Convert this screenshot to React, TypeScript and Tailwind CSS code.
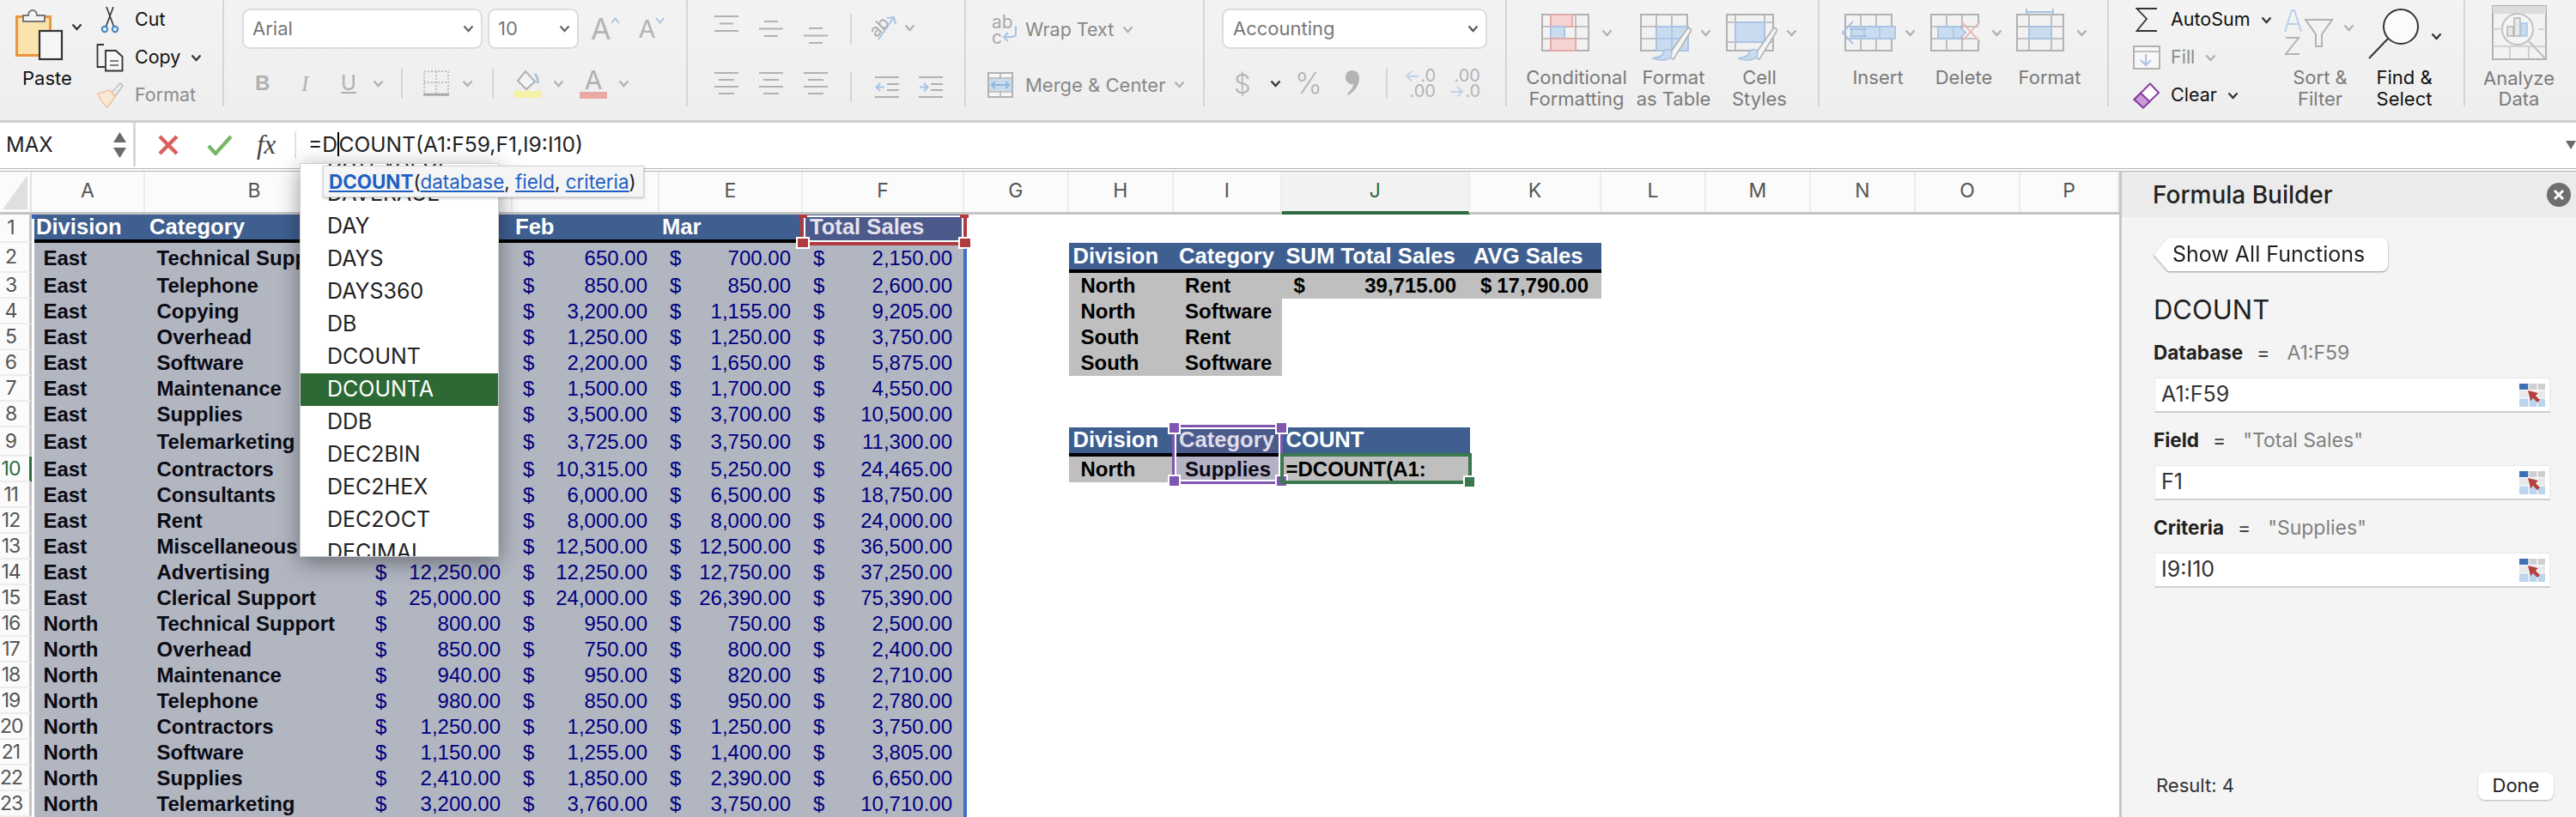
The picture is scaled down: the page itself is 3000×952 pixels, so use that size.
import React from "react";

const G = "#b2b2b2";
const LB = "#c9dcef";
const BS = "#a8c3e3";

function Chev({ color = "#b0b0b0", className = "" }: { color?: string; className?: string }) {
  return (
    <svg width="13" height="9" viewBox="0 0 13 9" className={`shrink-0 ${className}`}>
      <path d="M1.5 1.5 L6.5 7 L11.5 1.5" fill="none" stroke={color} strokeWidth="2.2" />
    </svg>
  );
}

function Sep({ className = "" }: { className?: string }) {
  return <div className={`w-[2px] bg-[#d6d6d6] shrink-0 ${className}`} />;
}

function PasteIcon() {
  return (
    <svg width="56" height="62" viewBox="0 0 56 62" className="shrink-0">
      <rect x="1.5" y="9.5" width="39" height="45" fill="#fbe3ad" stroke="#e8953f" strokeWidth="3" />
      <path d="M9 15 V8 H15 C15 0 25 0 25 8 H34 V15 Z" fill="#f4f4f4" stroke="#777" strokeWidth="2" />
      <rect x="28" y="26" width="26" height="33" fill="#f6f6f6" stroke="#333" strokeWidth="2.2" />
    </svg>
  );
}
function ScissorsIcon() {
  return (
    <svg width="24" height="32" viewBox="0 0 24 32" className="shrink-0">
      <path d="M7 25 L16 1 M17 25 L8 1" stroke="#333" strokeWidth="1.6" fill="none" />
      <circle cx="6" cy="27" r="3.2" fill="none" stroke="#3e86c8" strokeWidth="2" />
      <circle cx="18" cy="27" r="3.2" fill="none" stroke="#3e86c8" strokeWidth="2" />
    </svg>
  );
}
function CopyIcon() {
  return (
    <svg width="32" height="33" viewBox="0 0 32 33" className="shrink-0">
      <path d="M9 1 H1.5 V27 H10" fill="none" stroke="#333" strokeWidth="1.8" />
      <path d="M11 8 H23 L30.5 15 V31.5 H11 Z" fill="#f7f7f7" stroke="#333" strokeWidth="1.8" />
      <path d="M16 20 H26 M16 25 H26" stroke="#555" strokeWidth="1.6" />
    </svg>
  );
}
function BrushIcon() {
  return (
    <svg width="32" height="30" viewBox="0 0 32 30" className="shrink-0">
      <path d="M18 12 L28 1 L31 4 L22 16 Z" fill="none" stroke="#c4c4c4" strokeWidth="1.8" />
      <path d="M2 13 L16 9 L22 17 L13 29 Q7 25 2 13 Z" fill="#fae8d6" stroke="#eec7a3" strokeWidth="1.8" />
    </svg>
  );
}
function GrowA({ up }: { up: boolean }) {
  return (
    <div className="flex items-start">
      <span className={`${up ? "text-[34px]" : "text-[29px]"} text-[#b4b4b4] leading-[34px]`}>A</span>
      <svg width="11" height="8" viewBox="0 0 11 8" className="mt-[3px] shrink-0">
        <path d={up ? "M1 7 L5.5 1.5 L10 7" : "M1 1 L5.5 6.5 L10 1"} fill="none" stroke={BS} strokeWidth="1.8" />
      </svg>
    </div>
  );
}
function AlignIcon({ widths, offset = 0, h = 17 }: { widths: number[]; offset?: number; h?: number }) {
  return (
    <svg width="28" height={h + 20} viewBox={`0 0 28 ${h + 20}`} className="shrink-0">
      {widths.map((w, i) => (
        <rect key={i} x={(28 - w) / 2} y={offset + (i * h) / (widths.length - 1)} width={w} height="2" fill={G} />
      ))}
    </svg>
  );
}
function IndentIcon({ out }: { out: boolean }) {
  return (
    <svg width="28" height="26" viewBox="0 0 28 26" className="shrink-0">
      <rect x="0" y="1" width="28" height="2" fill={G} />
      <rect x="0" y="24" width="28" height="2" fill={G} />
      <rect x="14" y="9" width="14" height="2" fill={G} />
      <rect x="14" y="16" width="14" height="2" fill={G} />
      {out ? (
        <path d="M11 13.5 H2 M6 9 L1.5 13.5 L6 18" fill="none" stroke={BS} strokeWidth="2" />
      ) : (
        <path d="M1 13.5 H10 M6 9 L10.5 13.5 L6 18" fill="none" stroke={BS} strokeWidth="2" />
      )}
    </svg>
  );
}
function MiniGrid({ children, w = 56, h = 44, vs = [19, 38], hs = [15, 29], stroke = G }: { children?: React.ReactNode; w?: number; h?: number; vs?: number[]; hs?: number[]; stroke?: string }) {
  return (
    <>
      <rect x="1" y="1" width={w - 2} height={h - 2} fill="none" stroke={stroke} strokeWidth="2" />
      {vs.map((v) => (
        <path key={v} d={`M${v} 1 V${h - 1}`} stroke={stroke} strokeWidth="1.6" />
      ))}
      {hs.map((v) => (
        <path key={v} d={`M1 ${v} H${w - 1}`} stroke={stroke} strokeWidth="1.6" />
      ))}
      {children}
    </>
  );
}
function CondIcon() {
  return (
    <svg width="56" height="44" viewBox="0 0 56 44" className="shrink-0">
      <MiniGrid vs={[11, 27, 40]} />
      <rect x="11" y="1" width="25" height="14" fill="#f6d3d3" stroke="#e2a9a7" strokeWidth="1.8" />
      <rect x="11" y="15" width="16" height="14" fill={LB} stroke={BS} strokeWidth="1.8" />
      <rect x="11" y="29" width="29" height="14" fill="#f6d3d3" stroke="#e2a9a7" strokeWidth="1.8" />
    </svg>
  );
}
function BrushOver() {
  return (
    <>
      <path d="M32 50 L56 16 L60 19 L39 53 Z" fill="#f4f4f4" stroke={G} strokeWidth="1.6" />
      <path d="M14 52 C26 56 37 54 37 46 C36 40 28 40 27 46 C26 50 20 51 14 52 Z" fill={LB} stroke={BS} strokeWidth="1.6" />
    </>
  );
}
function FatIcon() {
  return (
    <svg width="60" height="56" viewBox="0 0 60 56" className="shrink-0">
      <MiniGrid w={56} vs={[19, 37]} hs={[15, 29]} />
      <rect x="19" y="15" width="37" height="28" fill={LB} stroke={BS} strokeWidth="1.8" />
      <path d="M37 15 V43 M19 29 H56" stroke={BS} strokeWidth="1.6" />
      <BrushOver />
    </svg>
  );
}
function CellStyleIcon() {
  return (
    <svg width="60" height="56" viewBox="0 0 60 56" className="shrink-0">
      <MiniGrid w={56} vs={[11, 45]} hs={[10, 33]} />
      <rect x="11" y="10" width="34" height="23" fill={LB} stroke={BS} strokeWidth="1.8" />
      <BrushOver />
    </svg>
  );
}
function InsertIcon() {
  return (
    <svg width="64" height="44" viewBox="0 0 64 44" className="shrink-0">
      <g transform="translate(4 0)">
        <MiniGrid vs={[19, 37]} />
      </g>
      <rect x="12" y="15" width="51" height="14" fill={LB} stroke={BS} strokeWidth="1.8" />
      <path d="M27 15 V29 M45 15 V29" stroke={BS} strokeWidth="1.6" />
      <path d="M30 18 H10 M30 26 H10 M14 9 L2 22 L14 35" fill="none" stroke={BS} strokeWidth="2" />
    </svg>
  );
}
function DeleteIcon() {
  return (
    <svg width="60" height="44" viewBox="0 0 60 44" className="shrink-0">
      <path d="M56 13 V1 H1 V43 H56 V31" fill="none" stroke={G} strokeWidth="2" />
      <path d="M1 15 H56 M1 29 H56 M19 1 V43 M37 1 V43" stroke={G} strokeWidth="1.6" />
      <path d="M9 15 H34 L41 22 L34 29 H9 Z" fill={LB} stroke={BS} strokeWidth="1.8" />
      <path d="M27 15 V29" stroke={BS} strokeWidth="1.6" />
      <path d="M36 9 L58 33 M58 9 L36 33" stroke="#eeb5b2" strokeWidth="1.8" />
    </svg>
  );
}
function CellFormatIcon() {
  return (
    <svg width="56" height="55" viewBox="0 0 56 55" className="shrink-0">
      <path d="M12 9 H43 M12 5 V12 M43 5 V12" stroke={BS} strokeWidth="1.8" />
      <g transform="translate(0 11)">
        <MiniGrid vs={[15, 41]} />
        <rect x="15" y="15" width="26" height="14" fill={LB} stroke={BS} strokeWidth="1.8" />
      </g>
    </svg>
  );
}
function SigmaIcon() {
  return (
    <svg width="25" height="28" viewBox="0 0 25 28" className="shrink-0">
      <path d="M25 1 H1.5 L13 13 L1.5 27 H25" fill="none" stroke="#333" strokeWidth="1.8" />
    </svg>
  );
}
function FillIcon() {
  return (
    <svg width="32" height="28" viewBox="0 0 32 28" className="shrink-0">
      <rect x="1" y="1" width="30" height="26" fill="#f7f7f7" stroke={G} strokeWidth="2" />
      <path d="M1 7 H31" stroke={G} strokeWidth="1.6" />
      <path d="M15 10 V23 M9 17 L15 23 L21 17" fill="none" stroke={BS} strokeWidth="2" />
    </svg>
  );
}
function ClearIcon() {
  return (
    <svg width="32" height="31" viewBox="0 0 32 31" className="shrink-0">
      <path d="M1.5 20 L20 1.5 L30 12 L12 29.5 Z" fill="#fff" stroke="#8a3ea3" strokeWidth="2" />
      <path d="M1.5 20 L9 12.5 L19.5 22.5 L12 29.5 Z" fill="#c99bd6" stroke="#8a3ea3" strokeWidth="2" />
    </svg>
  );
}
function SortIcon() {
  return (
    <svg width="58" height="56" viewBox="0 0 58 56" className="shrink-0">
      <path d="M1 27 L9 2 H12 L20 27 M4.5 18 H16.5" fill="none" stroke="#b9d0ea" strokeWidth="2" />
      <path d="M2 34 H17 L2 53 H18" fill="none" stroke={G} strokeWidth="2" />
      <path d="M25 13 H56 L44 30 V44 H37 V30 Z" fill="#f3f3f3" stroke={G} strokeWidth="2" />
    </svg>
  );
}
function FindIcon() {
  return (
    <svg width="60" height="60" viewBox="0 0 60 60" className="shrink-0">
      <circle cx="38" cy="21" r="20" fill="#fbfbfb" stroke="#333" strokeWidth="2" />
      <path d="M23 35 L1 58" stroke="#333" strokeWidth="2" />
    </svg>
  );
}
function AnalyzeIcon() {
  return (
    <svg width="64" height="64" viewBox="0 0 64 64" className="shrink-0">
      <rect x="1" y="1" width="62" height="62" fill="#f2f2f2" stroke={G} strokeWidth="2" />
      <rect x="1" y="1" width="62" height="9" fill="#dcdcdc" />
      <path d="M1 28 H10 M54 28 H63 M1 48 H63 M21 48 V63 M43 48 V63" stroke="#c8c8c8" strokeWidth="1.6" />
      <circle cx="30" cy="28" r="18" fill="#f5f5f5" stroke="#c2c2c2" strokeWidth="2" />
      <path d="M43 42 L62 62" stroke="#c2c2c2" strokeWidth="2.4" />
      <rect x="18" y="25" width="7" height="11" fill="#e8e8e8" stroke={G} strokeWidth="1.4" />
      <rect x="26" y="15" width="7" height="21" fill="#e8e8e8" stroke={G} strokeWidth="1.4" />
      <rect x="34" y="21" width="7" height="15" fill={LB} stroke={BS} strokeWidth="1.4" />
    </svg>
  );
}
function RefIcon() {
  return (
    <svg width="30" height="27" viewBox="0 0 30 27" className="shrink-0">
      <rect x="0" y="0" width="30" height="27" fill="#e9e9e9" />
      <rect x="0" y="0" width="11" height="7" fill="#3f6fb5" />
      <rect x="11" y="0" width="19" height="7" fill="#cfcfcf" />
      <rect x="0" y="17" width="30" height="10" fill="#bcd4ec" />
      <path d="M0 7.5 H30 M0 17 H30 M11 0 V27 M21 0 V27" stroke="#fff" strokeWidth="1.2" />
      <path d="M10 8 L22 11 L19 14 L24 19 L21 22 L16 17 L13 20 Z" fill="#b5413f" />
    </svg>
  );
}

function SmallBtn({ icon, label, dim, chev, chevDark, textMl = "" }: { icon: React.ReactNode; label: string; dim?: boolean; chev?: boolean; chevDark?: boolean; textMl?: string }) {
  return (
    <div className="flex items-center h-[44px] shrink-0">
      <div className="w-[45px] flex justify-center shrink-0">{icon}</div>
      <span className={`text-[21.5px] ${textMl} leading-none ${dim ? "text-[#8c8c8c]" : "text-[#111]"}`}>{label}</span>
      {chev && <Chev color={chevDark ? "#333" : "#b0b0b0"} className="ml-[12px]" />}
    </div>
  );
}

function BigBtn({ w, iconMl, icon, chevLeft, lines, dark, chevDark, top = "pt-[16px]", iconH = "h-[62px]" }: { w: string; iconMl: string; icon: React.ReactNode; chevLeft: string; lines: string[]; dark?: boolean; chevDark?: boolean; top?: string; iconH?: string }) {
  return (
    <div className={`${w} flex flex-col items-center shrink-0`}>
      <div className={`w-full flex items-start shrink-0 ${iconH} ${top} box-content`}>
        <div className={iconMl}>{icon}</div>
        <Chev color={chevDark ? "#333" : "#b0b0b0"} className={chevLeft} />
      </div>
      <div className={`text-[22px] leading-[25px] text-center whitespace-nowrap ${dark ? "text-[#111]" : "text-[#7b7b7b]"}`}>
        {lines.map((l) => (
          <div key={l}>{l}</div>
        ))}
      </div>
    </div>
  );
}

function Ribbon() {
  return (
    <div className="h-[143px] shrink-0 bg-gradient-to-b from-[#f3f3f3] to-[#eeeeee] border-b-[3px] border-[#cfcfcf] flex items-start">
      {/* Clipboard */}
      <div className="w-[261px] h-[124px] border-r-2 border-[#d6d6d6] flex shrink-0">
        <div className="w-[105px] pl-[18px] shrink-0 flex flex-col pt-[10px]">
          <div className="flex items-center">
            <PasteIcon />
            <Chev color="#333" className="ml-[9px] -mt-[20px]" />
          </div>
          <span className="text-[22px] leading-none text-[#111] ml-[8px] mt-[8px]">Paste</span>
        </div>
        <div className="flex flex-col pt-[1px]">
          <SmallBtn icon={<ScissorsIcon />} label="Cut" textMl="ml-[7px]" />
          <SmallBtn icon={<CopyIcon />} label="Copy" chev chevDark textMl="ml-[7px]" />
          <SmallBtn icon={<BrushIcon />} label="Format" dim textMl="ml-[7px]" />
        </div>
      </div>
      {/* Font */}
      <div className="w-[540px] h-[124px] border-r-2 border-[#d6d6d6] shrink-0 pt-[10px] pl-[21px]">
        <div className="flex items-center h-[47px]">
          <div className="w-[280px] h-full bg-white border-2 border-[#dcdcdc] rounded-[9px] flex items-center justify-between pl-[10px] pr-[8px] text-[22px] text-[#777]">
            <span>Arial</span>
            <Chev color="#666" />
          </div>
          <div className="w-[106px] h-full ml-[6px] bg-white border-2 border-[#dcdcdc] rounded-[9px] flex items-center justify-between pl-[10px] pr-[8px] text-[22px] text-[#777]">
            <span>10</span>
            <Chev color="#666" />
          </div>
          <div className="ml-[14px]"><GrowA up /></div>
          <div className="ml-[21px]"><GrowA up={false} /></div>
        </div>
        <div className="flex items-center h-[36px] mt-[22px]">
          <span className="ml-[15px] w-[18px] text-[24px] leading-none font-bold text-[#b0b0b0] font-['Liberation_Sans',sans-serif]">B</span>
          <span className="ml-[36px] w-[14px] text-[25px] leading-none italic text-[#b0b0b0] font-['Liberation_Serif',serif]">I</span>
          <span className="ml-[32px] w-[18px] text-[24px] leading-none text-[#b0b0b0] underline">U</span>
          <Chev className="ml-[19px]" />
          <Sep className="h-[36px] ml-[20px]" />
          <svg width="30" height="30" viewBox="0 0 30 30" className="ml-[24px] shrink-0">
            <rect x="1" y="1" width="28" height="26" fill="none" stroke={G} strokeWidth="1.5" strokeDasharray="2 2" />
            <path d="M15 1 V27 M1 14 H29" stroke={G} strokeWidth="1.5" strokeDasharray="2 2" />
            <path d="M0 28.5 H30" stroke="#999" strokeWidth="2" />
          </svg>
          <Chev className="ml-[15px]" />
          <Sep className="h-[36px] ml-[22px]" />
          <svg width="32" height="34" viewBox="0 0 32 34" className="ml-[24px] shrink-0">
            <path d="M4 14 L13 3 L24 15 L14 24 Z" fill="#f4f4f4" stroke={G} strokeWidth="2" />
            <path d="M24 6 Q28 10 27 17" fill="none" stroke={BS} strokeWidth="3" />
            <rect x="0" y="26" width="32" height="8" fill="#f6f1a5" />
          </svg>
          <Chev className="ml-[13px]" />
          <div className="ml-[18px] w-[32px] flex flex-col items-center shrink-0">
            <span className="text-[30px] leading-[26px] text-[#b0b0b0]">A</span>
            <div className="w-[32px] h-[8px] bg-[#eba9a5] mt-[1px]" />
          </div>
          <Chev className="ml-[13px]" />
        </div>
      </div>
      {/* Alignment */}
      <div className="w-[324px] h-[124px] border-r-2 border-[#d6d6d6] shrink-0 pl-[31px] pt-[16px]">
        <div className="flex items-start h-[36px]">
          <AlignIcon widths={[28, 16, 28]} offset={2} />
          <div className="ml-[24px]"><AlignIcon widths={[16, 28, 16]} offset={8} /></div>
          <div className="ml-[24px]"><AlignIcon widths={[16, 28, 16]} offset={16} /></div>
          <Sep className="h-[36px] ml-[26px]" />
          <span className="ml-[20px] -rotate-45 text-[20px] leading-[30px] text-[#aaa]">ab</span>
          <svg width="28" height="32" viewBox="0 0 28 32" className="-ml-[14px] shrink-0">
            <path d="M2 30 L20 4 M12 5 L20 4 L22 12" fill="none" stroke={BS} strokeWidth="2" />
          </svg>
          <Chev className="ml-[4px] mt-[12px]" />
        </div>
        <div className="flex items-center h-[36px] mt-[31px]">
          <div className="mt-[10px]"><AlignIcon widths={[28, 18, 28, 18]} h={24} /></div>
          <div className="ml-[24px] mt-[10px]"><AlignIcon widths={[28, 18, 28, 18]} h={24} /></div>
          <div className="ml-[24px] mt-[10px]"><AlignIcon widths={[28, 18, 28, 18]} h={24} /></div>
          <Sep className="h-[36px] ml-[26px]" />
          <div className="ml-[27px]"><IndentIcon out /></div>
          <div className="ml-[23px]"><IndentIcon out={false} /></div>
        </div>
      </div>
      {/* Wrap / merge */}
      <div className="w-[278px] h-[124px] border-r-2 border-[#d6d6d6] shrink-0 pl-[25px]">
        <div className="flex items-center h-[35px] mt-[17px]">
          <div className="w-[44px] ml-[5px] shrink-0 text-[21px] leading-[18px] text-[#aaa]">
            <div>ab</div>
            <div className="flex items-center">
              c
              <svg width="18" height="20" viewBox="0 0 18 20" className="shrink-0 -mt-[10px]">
                <path d="M16 1 V10 Q16 14 10 14 H3 M7 9 L2 14 L7 19" fill="none" stroke={BS} strokeWidth="2" />
              </svg>
            </div>
          </div>
          <span className="text-[21.5px] text-[#888] -ml-[5px] leading-none">Wrap Text</span>
          <Chev className="ml-[10px]" />
        </div>
        <div className="flex items-center h-[35px] mt-[29px]">
          <svg width="30" height="30" viewBox="0 0 30 30" className="shrink-0">
            <rect x="1" y="1" width="28" height="28" fill="#f7f7f7" stroke={G} strokeWidth="2" />
            <path d="M15 1 V7 M15 23 V29 M1 7 H29 M1 23 H29" stroke={G} strokeWidth="1.6" />
            <rect x="2" y="8" width="26" height="14" fill={LB} />
            <path d="M5 15 H25 M9 11 L5 15 L9 19 M21 11 L25 15 L21 19" fill="none" stroke="#8fb4de" strokeWidth="1.8" />
          </svg>
          <span className="text-[22px] text-[#888] ml-[14px] leading-none">Merge &amp; Center</span>
          <Chev className="ml-[10px]" />
        </div>
      </div>
      {/* Number */}
      <div className="w-[352px] h-[124px] border-r-2 border-[#d6d6d6] shrink-0 pt-[10px] pl-[20px]">
        <div className="w-[309px] h-[47px] bg-white border-2 border-[#dcdcdc] rounded-[9px] flex items-center justify-between pl-[11px] pr-[8px] text-[22px] text-[#777]">
          <span>Accounting</span>
          <Chev color="#555" />
        </div>
        <div className="flex items-center h-[36px] mt-[22px]">
          <span className="ml-[14px] w-[18px] text-[31px] text-[#b4b4b4] leading-none font-light">$</span>
          <Chev color="#333" className="ml-[24px]" />
          <span className="ml-[16px] w-[34px] text-[34px] text-[#b4b4b4] leading-none font-light">%</span>
          <svg width="18" height="32" viewBox="0 0 18 32" className="ml-[24px] shrink-0">
            <path d="M9 1 C14 1 17 5 17 10 C17 19 11 26 4 30 L3 28 C8 24 10 20 10 17 C5 18 1 14 1 9 C1 4 4 1 9 1 Z" fill="#b4b4b4" />
          </svg>
          <Sep className="h-[36px] ml-[30px]" />
          <div className="ml-[22px] w-[34px] text-[20px] leading-[18px] text-[#b4b4b4] shrink-0">
            <div className="flex justify-end items-center"><span className="text-[#b9d0ea]">←</span>.0</div>
            <div className="text-right">.00</div>
          </div>
          <div className="ml-[18px] w-[34px] text-[20px] leading-[18px] text-[#b4b4b4] shrink-0">
            <div className="text-right">.00</div>
            <div className="flex justify-end items-center"><span className="text-[#b9d0ea]">→</span>.0</div>
          </div>
        </div>
      </div>
      {/* Styles */}
      <div className="w-[364px] h-[124px] border-r-2 border-[#d6d6d6] shrink-0 pl-[20px] flex">
        <BigBtn w="w-[122px]" iconMl="ml-[20px]" icon={<CondIcon />} chevLeft="ml-[14px] mt-[18px]" lines={["Conditional", "Formatting"]} />
        <BigBtn w="w-[104px]" iconMl="ml-[13px]" icon={<FatIcon />} chevLeft="ml-[10px] mt-[18px]" lines={["Format", "as Table"]} />
        <BigBtn w="w-[96px]" iconMl="ml-[9px]" icon={<CellStyleIcon />} chevLeft="ml-[10px] mt-[18px]" lines={["Cell", "Styles"]} />
      </div>
      {/* Cells */}
      <div className="w-[337px] h-[124px] border-r-2 border-[#d6d6d6] shrink-0 pl-[18px] flex">
        <BigBtn w="w-[100px]" iconMl="ml-[7px]" icon={<InsertIcon />} chevLeft="ml-[10px] mt-[18px]" lines={["Insert"]} />
        <BigBtn w="w-[100px]" iconMl="ml-[11px]" icon={<DeleteIcon />} chevLeft="ml-[11px] mt-[18px]" lines={["Delete"]} />
        <BigBtn w="w-[100px]" iconMl="ml-[11px]" icon={<CellFormatIcon />} chevLeft="ml-[14px] mt-[29px]" top="pt-[5px]" iconH="h-[73px]" lines={["Format"]} />
      </div>
      {/* Editing */}
      <div className="w-[415px] h-[124px] border-r-2 border-[#d6d6d6] shrink-0 flex">
        <div className="w-[196px] pl-[21px] shrink-0 flex flex-col pt-[1px]">
          <SmallBtn icon={<SigmaIcon />} label="AutoSum" chev chevDark textMl="ml-[6px]" />
          <SmallBtn icon={<FillIcon />} label="Fill" dim chev textMl="ml-[6px]" />
          <SmallBtn icon={<ClearIcon />} label="Clear" chev chevDark textMl="ml-[6px]" />
        </div>
        <BigBtn w="w-[100px]" iconMl="ml-[8px]" icon={<SortIcon />} chevLeft="ml-[11px] mt-[18px]" top="pt-[10px]" iconH="h-[68px]" lines={["Sort &", "Filter"]} />
        <BigBtn w="w-[96px]" iconMl="ml-[6px]" icon={<FindIcon />} chevLeft="ml-[13px] mt-[28px]" top="pt-[10px]" iconH="h-[68px]" lines={["Find &", "Select"]} dark chevDark />
      </div>
      <div className="flex-1 flex flex-col items-center pt-[6px] pr-[4px]">
        <AnalyzeIcon />
        <div className="text-[22px] leading-[24px] text-center text-[#7b7b7b] mt-[9px]">
          <div>Analyze</div>
          <div>Data</div>
        </div>
      </div>
    </div>
  );
}

function FormulaBar() {
  return (
    <div className="h-[57px] shrink-0 bg-white border-b-[4px] border-double border-[#b4b4b4] flex items-center pb-[2px]">
      <div className="w-[158px] h-full border-r-[3px] border-[#d8d8d8] flex items-center justify-between pl-[7px] pr-[8px] shrink-0">
        <span className="text-[24px] text-[#222]">MAX</span>
        <div className="flex flex-col gap-[6px] shrink-0">
          <svg width="15" height="12" viewBox="0 0 15 12"><path d="M7.5 0 L15 12 H0 Z" fill="#6a6a6a" /></svg>
          <svg width="15" height="12" viewBox="0 0 15 12"><path d="M7.5 12 L15 0 H0 Z" fill="#6a6a6a" /></svg>
        </div>
      </div>
      <svg width="24" height="24" viewBox="0 0 24 24" className="ml-[26px] shrink-0">
        <path d="M2 2 L22 22 M22 2 L2 22" stroke="#d9605c" strokeWidth="4.4" />
      </svg>
      <svg width="30" height="24" viewBox="0 0 30 24" className="ml-[33px] shrink-0">
        <path d="M2 13 L10 22 L28 2" fill="none" stroke="#75b566" strokeWidth="4.2" />
      </svg>
      <span className="ml-[28px] w-[30px] text-[31px] italic text-[#444] font-['Liberation_Serif',serif] leading-none">fx</span>
      <div className="ml-[14px] w-[2px] h-[32px] bg-[#e2e2e2]" />
      <div className="ml-[14px] flex items-center text-[24.6px] text-[#222] whitespace-nowrap">
        <span>=D</span>
        <span className="w-[1.5px] h-[28px] bg-black" />
        <span>COUNT(A1:F59,F1,I9:I10)</span>
      </div>
      <svg width="12" height="10" viewBox="0 0 12 10" className="ml-auto shrink-0">
        <path d="M6 10 L12 0 H0 Z" fill="#6a6a6a" />
      </svg>
    </div>
  );
}

const COLS =
  "grid grid-cols-[37px_132px_256px_172px_171px_167px_188px_121.5px_122.5px_125.5px_219.5px_153px_122px_122px_122px_122px_115px]";

function ColumnHeader() {
  const letters = "ABCDEFGHIJKLMNOP".split("");
  return (
    <div className={`${COLS} h-[50px] bg-[#fbfbfb] border-b-[3px] border-[#c4c4c4] shrink-0`}>
      <div className="border-r-2 border-[#e4e4e4] flex items-end p-[3px]">
        <div className="w-[30px] h-[40px] bg-[#dfdfdf] [clip-path:polygon(100%_0,100%_100%,0_100%)]" />
      </div>
      {letters.map((l) => (
        <div
          key={l}
          className={`flex items-center justify-center text-[23px] border-r-2 border-[#ececec] pb-[2px] ${
            l === "J" ? "bg-[#f2f2f2] text-[#2f6b3f] border-b-[4px] border-b-[#2f6b3f] -mb-[3px]" : "text-[#555]"
          }`}
        >
          {l}
        </div>
      ))}
    </div>
  );
}

type Money = number | null;
const rows: [string, string, Money, Money, Money, Money][] = [
  ["East", "Technical Support", null, 650, 700, 2150],
  ["East", "Telephone", null, 850, 850, 2600],
  ["East", "Copying", null, 3200, 1155, 9205],
  ["East", "Overhead", null, 1250, 1250, 3750],
  ["East", "Software", null, 2200, 1650, 5875],
  ["East", "Maintenance", null, 1500, 1700, 4550],
  ["East", "Supplies", null, 3500, 3700, 10500],
  ["East", "Telemarketing", null, 3725, 3750, 11300],
  ["East", "Contractors", null, 10315, 5250, 24465],
  ["East", "Consultants", null, 6000, 6500, 18750],
  ["East", "Rent", null, 8000, 8000, 24000],
  ["East", "Miscellaneous", null, 12500, 12500, 36500],
  ["East", "Advertising", 12250, 12250, 12750, 37250],
  ["East", "Clerical Support", 25000, 24000, 26390, 75390],
  ["North", "Technical Support", 800, 950, 750, 2500],
  ["North", "Overhead", 850, 750, 800, 2400],
  ["North", "Maintenance", 940, 950, 820, 2710],
  ["North", "Telephone", 980, 850, 950, 2780],
  ["North", "Contractors", 1250, 1250, 1250, 3750],
  ["North", "Software", 1150, 1255, 1400, 3805],
  ["North", "Supplies", 2410, 1850, 2390, 6650],
  ["North", "Telemarketing", 3200, 3760, 3750, 10710],
];

const fmt = (n: number) => n.toLocaleString("en-US", { minimumFractionDigits: 2, maximumFractionDigits: 2 });

function Money({ v }: { v: Money }) {
  return (
    <div className="bg-[#b1b6c1] text-[#00007f] flex items-center justify-between pl-[12px] pr-[14px] overflow-hidden">
      {v !== null && (
        <>
          <span>$</span>
          <span>{fmt(v)}</span>
        </>
      )}
    </div>
  );
}

function Txt({ children, bold = true, className = "" }: { children?: React.ReactNode; bold?: boolean; className?: string }) {
  return <div className={`flex items-center whitespace-nowrap ${bold ? "font-bold" : ""} ${className}`}>{children}</div>;
}

const HEAD = "bg-[#3f5f90] text-white text-[25.6px] border-b-4 border-black";
const GREY = "bg-[#bfbfbf] text-black";

function RowLabel({ n, active }: { n: number; active?: boolean }) {
  return (
    <div className={`font-['Inter',sans-serif] text-[23px] bg-[#fbfbfb] border-b-2 border-[#ececec] flex items-center border-r-[3px] ${active ? "text-[#2f6b3f] border-r-[#2f6b3f] border-r-4" : "text-[#555] border-r-[#c4c4c4]"}`}>
      <span className="w-[25px] -tracking-[1px] text-center">{n}</span>
    </div>
  );
}

function Sheet() {
  return (
    <div className="relative w-[2468px] shrink-0 flex flex-col font-['Liberation_Sans',Arial,sans-serif] text-[24px] leading-none overflow-hidden">
      <div className="font-['Inter',sans-serif]">
        <ColumnHeader />
      </div>
      {/* Row 1 */}
      <div className={`${COLS} h-[33px] shrink-0`}>
        <RowLabel n={1} />
        <Txt className={`${HEAD} ml-[3px] pl-[2px]`}>Division</Txt>
        <Txt className={`${HEAD} pl-[5px]`}>Category</Txt>
        <Txt className={HEAD}></Txt>
        <Txt className={`${HEAD} pl-[3px]`}>Feb</Txt>
        <Txt className={`${HEAD} pl-[3px]`}>Mar</Txt>
        <Txt className="bg-[#4b5a8b] text-[#e6e2ec] text-[25.6px] pl-[8px] pb-[4px]">Total Sales</Txt>
      </div>
      {rows.map((r, i) => {
        const n = i + 2;
        const h = n === 2 ? "h-[35px]" : n === 9 ? "h-[34px]" : "h-[30px]";
        return (
          <div key={n} className={`${COLS} ${h} shrink-0`}>
            <RowLabel n={n} active={n === 10} />
            <Txt className="bg-[#b1b6c1] text-[#0a0a14] ml-[3px] pl-[10.5px]">{r[0]}</Txt>
            <Txt className="bg-[#b1b6c1] text-[#0a0a14] pl-[13.5px] overflow-hidden">{r[1]}</Txt>
            <Money v={r[2]} />
            <Money v={r[3]} />
            <Money v={r[4]} />
            <Money v={r[5]} />
            <div />
            {n === 2 && (
              <>
                <Txt className={`${HEAD} pl-[5px]`}>Division</Txt>
                <Txt className={`${HEAD} pl-[6px]`}>Category</Txt>
                <Txt className={`${HEAD} pl-[5px] whitespace-pre`}>SUM Total Sales</Txt>
                <Txt className={`${HEAD} pl-[4px]`}>AVG Sales</Txt>
              </>
            )}
            {n === 3 && (
              <>
                <Txt className={`${GREY} pl-[14px]`}>North</Txt>
                <Txt className={`${GREY} pl-[13px]`}>Rent</Txt>
                <Txt className={`${GREY} justify-between pl-[14px] pr-[16px]`}>
                  <span>$</span>
                  <span>39,715.00</span>
                </Txt>
                <Txt className={`${GREY} justify-between pl-[12px] pr-[15px]`}>
                  <span>$</span>
                  <span>17,790.00</span>
                </Txt>
              </>
            )}
            {(n === 4 || n === 5 || n === 6) && (
              <>
                <Txt className={`${GREY} pl-[14px]`}>{n === 4 ? "North" : "South"}</Txt>
                <Txt className={`${GREY} pl-[13px]`}>{n === 5 ? "Rent" : "Software"}</Txt>
              </>
            )}
            {n === 9 && (
              <>
                <Txt className={`${HEAD} pl-[5px]`}>Division</Txt>
                <Txt className="bg-[#4b5a8b] text-[#dfdcea] text-[25.6px] pl-[6px] border-b-4 border-black">Category</Txt>
                <Txt className={`${HEAD} pl-[5px]`}>COUNT</Txt>
              </>
            )}
            {n === 10 && (
              <>
                <Txt className={`${GREY} pl-[14px]`}>North</Txt>
                <Txt className="bg-[#b4b2c4] text-[#0a0a14] pl-[13px]">Supplies</Txt>
                <Txt className={`${GREY} pl-[5px]`}>=DCOUNT(A1:</Txt>
              </>
            )}
          </div>
        );
      })}

      {/* Range highlight overlays */}
      <div className="absolute left-[37px] top-[50px] w-[5px] h-[5px] bg-[#3566c4]" />
      <div className="absolute left-[1122px] top-[86px] bottom-0 w-[4px] bg-[#3f6fc8]" />
      <div className="absolute left-[932px] top-[51px] w-[194px] h-[35px] border-x-[4px] border-b-[4px] border-[#b03a3d]">
        <div className="w-full h-full border-2 border-white" />
      </div>
      <div className="absolute left-[929px] top-[78px] w-[12px] h-[10px] bg-[#b03a3d] outline-2 outline-white" />
      <div className="absolute left-[1118px] top-[78px] w-[12px] h-[10px] bg-[#b03a3d] outline-2 outline-white" />
      <div className="absolute left-[930px] top-[50px] w-[10px] h-[4px] bg-[#b03a3d]" />
      <div className="absolute left-[1118px] top-[50px] w-[10px] h-[4px] bg-[#b03a3d]" />

      <div className="absolute left-[1365px] top-[295px] w-[129px] h-[69px] border-[3px] border-[#7f57b1]">
        <div className="w-full h-full border-2 border-white" />
      </div>
      <div className="absolute left-[1362px] top-[293px] w-[11px] h-[11px] bg-[#7f57b1] outline-2 outline-white" />
      <div className="absolute left-[1487px] top-[293px] w-[11px] h-[11px] bg-[#7f57b1] outline-2 outline-white" />
      <div className="absolute left-[1362px] top-[355px] w-[11px] h-[11px] bg-[#7f57b1] outline-2 outline-white" />
      <div className="absolute left-[1487px] top-[355px] w-[11px] h-[11px] bg-[#7f57b1] outline-2 outline-white" />

      <div className="absolute left-[1491px] top-[328px] w-[223px] h-[36px] border-[4px] border-[#3b7850]" />
      <div className="absolute left-[1706px] top-[356px] w-[11px] h-[11px] bg-[#3b7850] outline-2 outline-white" />
    </div>
  );
}

function ArgRow({ name, value, input }: { name: string; value: string; input: string }) {
  return (
    <div className="mb-[19px]">
      <div className="flex items-center h-[27px] text-[23px] leading-none">
        <span className="font-bold text-[#222] text-[22.5px]">{name}</span>
        <span className="ml-[16px] text-[#444]">=</span>
        <span className="ml-[20px] text-[#808080]">{value}</span>
      </div>
      <div className="mt-[15px] ml-[1px] w-[461px] h-[41px] bg-white border border-[#e8e8e8] border-b-2 border-b-[#cfcfcf] flex items-center justify-between pl-[7px] pr-[5px] text-[25px] text-[#333]">
        <span>{input}</span>
        <RefIcon />
      </div>
    </div>
  );
}

function Panel() {
  return (
    <div className="flex-1 relative bg-[#f4f4f4] border-l-[3px] border-[#c6c6c6] flex flex-col">
      <div className="h-[53px] bg-[#ebebeb] flex items-center justify-between pl-[36px] pr-[6px] shrink-0">
        <span className="text-[28px] font-medium text-[#222]">Formula Builder</span>
        <svg width="28" height="28" viewBox="0 0 28 28">
          <circle cx="14" cy="14" r="14" fill="#6e6e6e" />
          <path d="M9 9 L19 19 M19 9 L9 19" stroke="#fff" strokeWidth="3" />
        </svg>
      </div>
      <div className="pl-[37px] pt-[24px] flex-1 flex flex-col">
        <div className="flex items-center h-[39px] w-[273px] [filter:drop-shadow(0_1px_1px_rgba(0,0,0,0.4))]">
          <div className="w-[17px] h-[39px] bg-white [clip-path:polygon(100%_0,100%_100%,0_50%)] shrink-0" />
          <div className="flex-1 h-[39px] bg-white rounded-r-[8px] flex items-center pl-[5px] text-[25px] text-[#222] whitespace-nowrap">
            Show All Functions
          </div>
        </div>
        <div className="mt-[26px] h-[38px] flex items-center text-[31px] text-[#222]">DCOUNT</div>
        <div className="mt-[18px]">
          <ArgRow name="Database" value="A1:F59" input="A1:F59" />
          <ArgRow name="Field" value={'"Total Sales"'} input="F1" />
          <ArgRow name="Criteria" value={'"Supplies"'} input="I9:I10" />
        </div>
        <div className="mt-auto pb-[20px] pr-[26px] flex items-center justify-between">
          <span className="text-[22px] text-[#333] ml-[3px]">Result: 4</span>
          <span className="w-[88px] h-[32px] bg-white rounded-[8px] shadow-[0_1px_2px_rgba(0,0,0,0.25)] flex items-center justify-center text-[22px] text-[#222]">Done</span>
        </div>
      </div>
    </div>
  );
}

const FN = ["DATEVALUE", "DAVERAGE", "DAY", "DAYS", "DAYS360", "DB", "DCOUNT", "DCOUNTA", "DDB", "DEC2BIN", "DEC2HEX", "DEC2OCT", "DECIMAL"];

function Autocomplete() {
  return (
    <div className="absolute left-[349px] top-[190px] w-[232px] h-[459px] bg-white border border-[#cfcfcf] overflow-hidden shadow-[0_6px_24px_rgba(0,0,0,0.4)]">
      <div className="-mt-[22px] text-[25px] text-[#222]">
        {FN.map((f) => (
          <div key={f} className={`h-[38px] flex items-center pl-[31px] ${f === "DCOUNTA" ? "bg-[#2c6935] text-white" : ""}`}>
            {f}
          </div>
        ))}
      </div>
    </div>
  );
}

function Tooltip() {
  return (
    <div className="absolute left-[376px] top-[193px] w-[374px] h-[37px] bg-[#f5f5f5] border border-[#d4d4d4] shadow-[0_1px_3px_rgba(0,0,0,0.25)] flex items-center pl-[6px] text-[22.4px] text-[#222] whitespace-nowrap">
      <span className="font-bold text-[#1f5fc4] underline">DCOUNT</span>
      <span>(</span>
      <span className="text-[#1f5fc4] underline">database</span>
      <span className="whitespace-pre">, </span>
      <span className="text-[#1f5fc4] underline">field</span>
      <span className="whitespace-pre">, </span>
      <span className="text-[#1f5fc4] underline">criteria</span>
      <span>)</span>
    </div>
  );
}

export default function App() {
  return (
    <div className="relative w-[3000px] h-[952px] overflow-hidden bg-white flex flex-col font-['Inter','Liberation_Sans',sans-serif]">
      <Ribbon />
      <FormulaBar />
      <div className="flex h-[752px] shrink-0 overflow-hidden">
        <Sheet />
        <Panel />
      </div>
      <Autocomplete />
      <Tooltip />
    </div>
  );
}
